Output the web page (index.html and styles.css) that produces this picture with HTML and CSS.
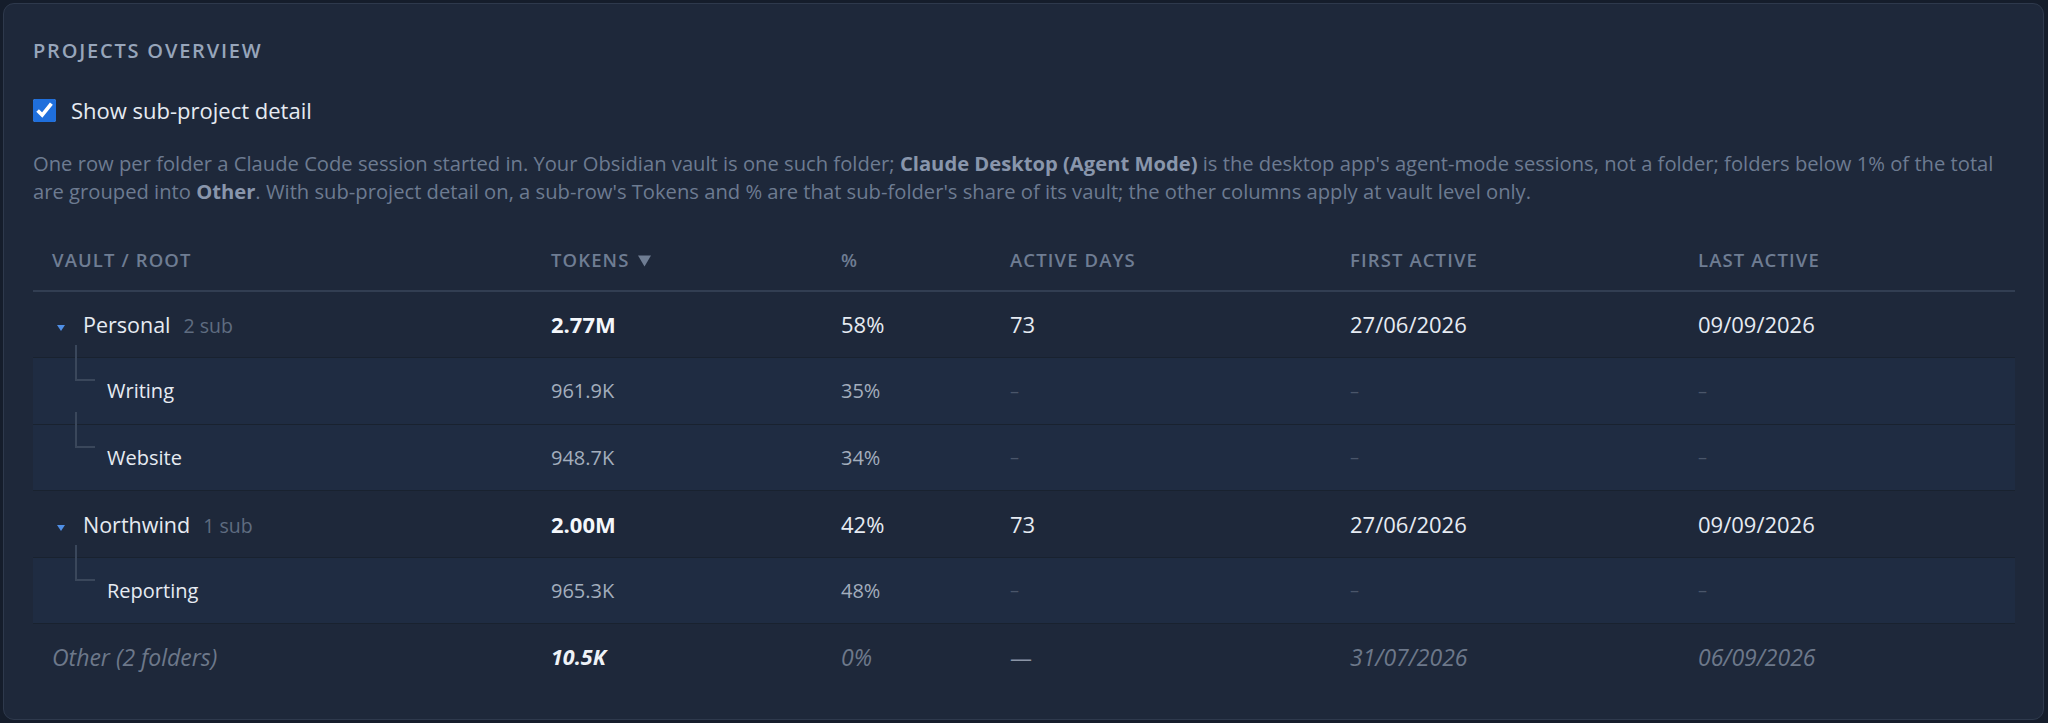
FILE: index.html
```html
<!DOCTYPE html>
<html lang="en">
<head>
<meta charset="utf-8">
<title>Projects overview</title>
<link rel="stylesheet" href="styles.css">
</head>
<body>
<section class="card">
  <h2 class="title">Projects overview</h2>
  <label class="toggle">
    <input type="checkbox" checked>
    <span>Show sub-project detail</span>
  </label>
  <p class="desc">One row per folder a Claude Code session started in. Your Obsidian vault is one such folder; <b>Claude Desktop (Agent Mode)</b> is the desktop app's agent-mode sessions, not a folder; folders below 1% of the total are grouped into <b>Other</b>. With sub-project detail on, a sub-row's Tokens and % are that sub-folder's share of its vault; the other columns apply at vault level only.</p>
  <table class="grid">
    <colgroup>
      <col class="c-name"><col class="c-tok"><col class="c-pct"><col class="c-days"><col class="c-first"><col class="c-last">
    </colgroup>
    <thead>
      <tr><th>Vault / Root</th><th>Tokens <svg class="sort" width="13" height="12" viewBox="0 0 13 12"><path d="M0 0.5H13L6.5 11.5Z"/></svg></th><th>%</th><th>Active days</th><th>First active</th><th>Last active</th></tr>
    </thead>
    <tbody>
      <tr class="parent">
        <td><span class="caret"><svg width="8" height="6" viewBox="0 0 8 6"><path d="M0 0H8L4 6Z"/></svg></span><span class="name">Personal</span><span class="count">2 sub</span></td>
        <td class="tok">2.77M</td><td>58%</td><td>73</td><td>27/06/2026</td><td>09/09/2026</td>
      </tr>
      <tr class="sub">
        <td><span class="branch"></span><span class="subname">Writing</span></td>
        <td>961.9K</td><td>35%</td><td class="dash">–</td><td class="dash">–</td><td class="dash">–</td>
      </tr>
      <tr class="sub">
        <td><span class="branch"></span><span class="subname">Website</span></td>
        <td>948.7K</td><td>34%</td><td class="dash">–</td><td class="dash">–</td><td class="dash">–</td>
      </tr>
      <tr class="parent">
        <td><span class="caret"><svg width="8" height="6" viewBox="0 0 8 6"><path d="M0 0H8L4 6Z"/></svg></span><span class="name">Northwind</span><span class="count">1 sub</span></td>
        <td class="tok">2.00M</td><td>42%</td><td>73</td><td>27/06/2026</td><td>09/09/2026</td>
      </tr>
      <tr class="sub">
        <td><span class="branch"></span><span class="subname">Reporting</span></td>
        <td>965.3K</td><td>48%</td><td class="dash">–</td><td class="dash">–</td><td class="dash">–</td>
      </tr>
      <tr class="other">
        <td>Other (2 folders)</td>
        <td class="tok">10.5K</td><td>0%</td><td class="none">—</td><td>31/07/2026</td><td>06/09/2026</td>
      </tr>
    </tbody>
  </table>
</section>
</body>
</html>
```

FILE: styles.css
```css
html, body {
  margin: 0;
  background: #151d2b;
}
body {
  padding: 3px 4px 3px 3px;
  font-family: "Open Sans", "Noto Sans", sans-serif;
  color: #e2e8f0;
}
.card {
  background: #1e283a;
  border: 1px solid #2e394c;
  border-radius: 11px;
  padding: 35px 28px 29px 29px;
}
.title {
  margin: 0 0 33px;
  font-size: 20px;
  line-height: 24px;
  font-weight: 600;
  letter-spacing: 0.09em;
  text-transform: uppercase;
  color: #97a5ba;
}
.toggle {
  display: flex;
  align-items: center;
  gap: 15px;
  height: 28px;
  font-size: 22px;
  color: #e6ebf2;
}
.toggle input {
  margin: 0;
  width: 23px;
  height: 23px;
  accent-color: #1f6fdc;
}
.desc {
  margin: 26px 0 23.5px;
  font-size: 20.2px;
  line-height: 27.6px;
  color: #6d7b91;
}
.desc b {
  font-weight: 700;
  color: #8996ac;
}
.grid {
  width: 100%;
  border-collapse: collapse;
  table-layout: fixed;
}
.c-name { width: 499px; }
.c-tok { width: 290px; }
.c-pct { width: 169px; }
.c-days { width: 340px; }
.c-first { width: 348px; }
.grid th {
  height: 61px;
  padding: 0 0 0 19px;
  text-align: left;
  font-size: 18.5px;
  font-weight: 600;
  letter-spacing: 0.06em;
  text-transform: uppercase;
  color: #6f7d93;
  border-bottom: 2px solid #323e52;
}
.sort {
  fill: #6f7d93;
  margin-left: 3px;
  vertical-align: 0;
}
.grid td {
  height: 65.5px;
  padding: 0 0 0 19px;
  font-size: 22px;
  color: #e6ebf2;
  border-bottom: 1px solid #19222f;
  white-space: nowrap;
}
.grid tbody tr:last-child td {
  border-bottom: 0;
}
.parent .tok {
  font-weight: 700;
  color: #f4f7fb;
}
.caret {
  display: inline-block;
  width: 31px;
  padding-left: 5px;
  box-sizing: border-box;
  vertical-align: middle;
  line-height: 0;
}
.caret svg {
  fill: #4f8fe6;
  position: relative;
  top: -1px;
}
.name {
  font-size: 21.5px;
}
.count {
  margin-left: 13px;
  font-size: 19.5px;
  color: #5f6c80;
}
.sub td {
  background: #1f2c42;
  font-size: 20px;
  color: #a3aebd;
}
.sub td:first-child {
  position: relative;
  color: #e6ebf2;
}
.branch {
  position: absolute;
  left: 42px;
  top: -13px;
  width: 18px;
  height: 34px;
  border-left: 2px solid #3a475b;
  border-bottom: 2px solid #3a475b;
}
.subname {
  padding-left: 55px;
}
.sub td.dash {
  color: #4a566a;
  font-size: 18px;
}
.other td {
  font-size: 23px;
  font-style: italic;
  color: #6d788a;
}
.other td.tok {
  font-size: 21.5px;
  font-weight: 700;
  color: #eef2f7;
}
.other td.none {
  font-size: 22px;
  font-style: normal;
  color: #8b95a6;
}
```
